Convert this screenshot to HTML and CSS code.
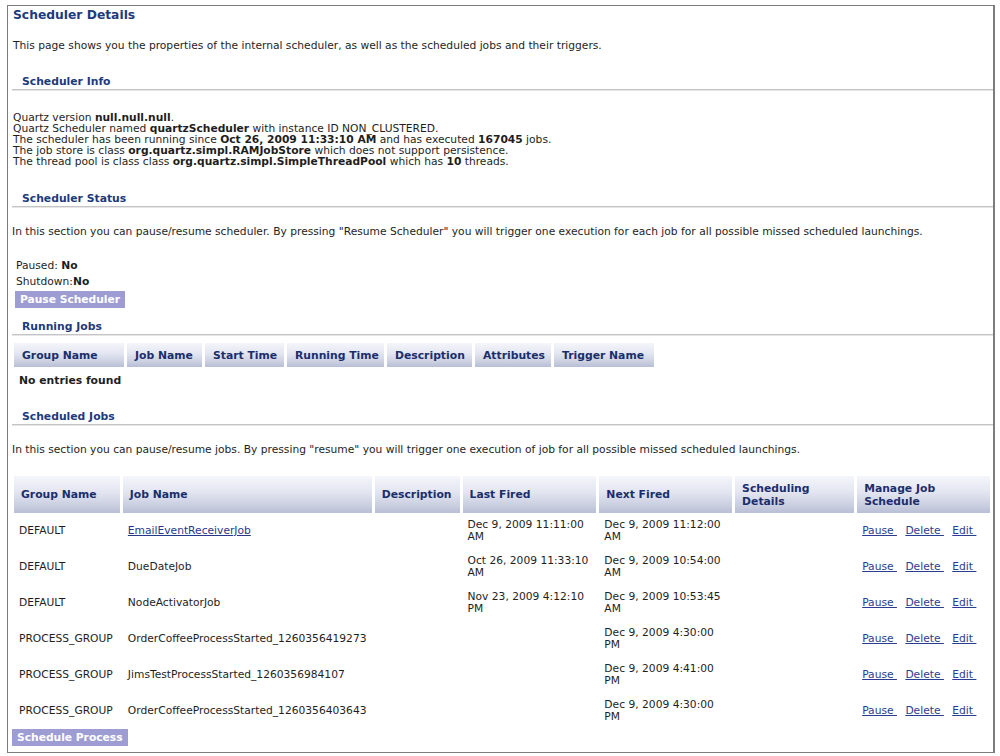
FILE: index.html
```html
<!DOCTYPE html>
<html>
<head>
<meta charset="utf-8">
<link rel="stylesheet" href="styles.css">
</head>
<body>
<div class="frame">
  <h1 class="title">Scheduler Details</h1>
  <p class="desc">This page shows you the properties of the internal scheduler, as well as the scheduled jobs and their triggers.</p>

  <h2 class="section first">Scheduler Info</h2>
  <div class="info">
    <div>Quartz version <b>null.null.null</b>.</div>
    <div>Quartz Scheduler named <b>quartzScheduler</b> with instance ID NON_CLUSTERED.</div>
    <div>The scheduler has been running since <b>Oct 26, 2009 11:33:10 AM</b> and has executed <b>167045</b> jobs.</div>
    <div>The job store is class <b>org.quartz.simpl.RAMJobStore</b> which does not support persistence.</div>
    <div>The thread pool is class class <b>org.quartz.simpl.SimpleThreadPool</b> which has <b>10</b> threads.</div>
  </div>

  <h2 class="section status">Scheduler Status</h2>
  <p class="note">In this section you can pause/resume scheduler. By pressing "Resume Scheduler" you will trigger one execution for each job for all possible missed scheduled launchings.</p>
  <div class="state">
    <div>Paused: <b>No</b></div>
    <div>Shutdown:<b>No</b></div>
  </div>
  <button class="btn pause">Pause Scheduler</button>

  <h2 class="section running">Running Jobs</h2>
  <table class="grid run">
    <colgroup>
      <col style="width:110px"><col style="width:75px"><col style="width:79px"><col style="width:97px"><col style="width:85px"><col style="width:76px"><col style="width:100px">
    </colgroup>
    <thead>
      <tr><th>Group Name</th><th>Job Name</th><th>Start Time</th><th>Running Time</th><th>Description</th><th>Attributes</th><th>Trigger Name</th></tr>
    </thead>
  </table>
  <div class="empty">No entries found</div>

  <h2 class="section scheduled">Scheduled Jobs</h2>
  <p class="note">In this section you can pause/resume jobs. By pressing "resume" you will trigger one execution of job for all possible missed scheduled launchings.</p>
  <table class="grid jobs">
    <colgroup>
      <col style="width:106px"><col style="width:249px"><col style="width:85px"><col style="width:134px"><col style="width:133px"><col style="width:120px"><col style="width:133px">
    </colgroup>
    <thead>
      <tr><th>Group Name</th><th>Job Name</th><th>Description</th><th>Last Fired</th><th>Next Fired</th><th>Scheduling<br>Details</th><th>Manage Job<br>Schedule</th></tr>
    </thead>
    <tbody>
      <tr><td>DEFAULT</td><td><a href="#" class="plain">EmailEventReceiverJob</a></td><td></td><td>Dec 9, 2009 11:11:00<br>AM</td><td>Dec 9, 2009 11:12:00<br>AM</td><td></td><td class="acts"><a href="#">Pause&nbsp;</a> <a href="#">Delete&nbsp;</a> <a href="#">Edit&nbsp;</a></td></tr>
      <tr><td>DEFAULT</td><td>DueDateJob</td><td></td><td>Oct 26, 2009 11:33:10<br>AM</td><td>Dec 9, 2009 10:54:00<br>AM</td><td></td><td class="acts"><a href="#">Pause&nbsp;</a> <a href="#">Delete&nbsp;</a> <a href="#">Edit&nbsp;</a></td></tr>
      <tr><td>DEFAULT</td><td>NodeActivatorJob</td><td></td><td>Nov 23, 2009 4:12:10<br>PM</td><td>Dec 9, 2009 10:53:45<br>AM</td><td></td><td class="acts"><a href="#">Pause&nbsp;</a> <a href="#">Delete&nbsp;</a> <a href="#">Edit&nbsp;</a></td></tr>
      <tr><td>PROCESS_GROUP</td><td>OrderCoffeeProcessStarted_1260356419273</td><td></td><td></td><td>Dec 9, 2009 4:30:00<br>PM</td><td></td><td class="acts"><a href="#">Pause&nbsp;</a> <a href="#">Delete&nbsp;</a> <a href="#">Edit&nbsp;</a></td></tr>
      <tr><td>PROCESS_GROUP</td><td>JimsTestProcessStarted_1260356984107</td><td></td><td></td><td>Dec 9, 2009 4:41:00<br>PM</td><td></td><td class="acts"><a href="#">Pause&nbsp;</a> <a href="#">Delete&nbsp;</a> <a href="#">Edit&nbsp;</a></td></tr>
      <tr><td>PROCESS_GROUP</td><td>OrderCoffeeProcessStarted_1260356403643</td><td></td><td></td><td>Dec 9, 2009 4:30:00<br>PM</td><td></td><td class="acts"><a href="#">Pause&nbsp;</a> <a href="#">Delete&nbsp;</a> <a href="#">Edit&nbsp;</a></td></tr>
    </tbody>
  </table>
  <button class="btn schedule">Schedule Process</button>
</div>
</body>
</html>
```

FILE: styles.css
```css
html, body {
  margin: 0;
  padding: 0;
  background: #ffffff;
}
body {
  font-family: "DejaVu Sans", Verdana, sans-serif;
  font-size: 10.7px;
  color: #1e1e1e;
}
.frame {
  box-sizing: border-box;
  margin: 5px 0 0 7px;
  width: 988px;
  height: 748px;
  border: 1px solid #7c7c7c;
  border-right-width: 2px;
}
.title {
  margin: 0;
  padding-left: 5px;
  font-size: 12.3px;
  line-height: 18px;
  font-weight: bold;
  color: #1d3a7c;
}
.desc {
  margin: 15px 0 0;
  padding-left: 5px;
  line-height: 14px;
}
.section {
  margin: 21px 0 0 4px;
  padding-left: 10px;
  font-size: 10.8px;
  line-height: 15px;
  font-weight: bold;
  color: #1d3a7c;
  border-bottom: 1px solid #c4c4c4;
  box-shadow: 0 1px 0 #e6e6e6;
}
.info {
  margin-top: 22px;
  padding-left: 5px;
  line-height: 11px;
}
.section.status {
  margin-top: 24px;
}
.note {
  margin: 18px 0 0;
  padding-left: 4px;
  line-height: 14px;
}
.state {
  margin-top: 19px;
  padding-left: 8px;
  line-height: 16px;
}
.btn {
  display: block;
  border: 0;
  background: #9d9dd3;
  color: #ffffff;
  font-family: "DejaVu Sans", Verdana, sans-serif;
  font-size: 10.7px;
  font-weight: bold;
  line-height: 17px;
  height: 17px;
  padding: 0 5px;
  margin: 1px 0 0 7px;
}
.section.running {
  margin-top: 11px;
}
.grid {
  border-collapse: separate;
  border-spacing: 3px 0;
  table-layout: fixed;
  margin-left: 3px;
}
.grid th {
  box-sizing: border-box;
  text-align: left;
  font-size: 10.8px;
  font-weight: bold;
  color: #1b2e6c;
  line-height: 13px;
  padding: 0 0 0 8px;
  white-space: nowrap;
  background: linear-gradient(#f5f6fb 0%, #e2e5f0 45%, #c9cee0 80%, #b8bed5 100%);
  vertical-align: middle;
}
.run {
  margin-top: 8px;
}
.run th {
  height: 24px;
}
.empty {
  margin-top: 7px;
  padding-left: 11px;
  font-size: 10.8px;
  font-weight: bold;
  line-height: 14px;
}
.section.scheduled {
  margin-top: 21px;
}
.jobs {
  margin-top: 19px;
}
.jobs th {
  height: 37px;
  padding-left: 7px;
}
.jobs td {
  height: 36px;
  padding: 0 0 0 5px;
  line-height: 12px;
  white-space: nowrap;
  vertical-align: middle;
}
.jobs a {
  color: #2b3d8f;
}
.jobs a.plain {
  color: #27378a;
}
.acts a {
  margin-right: 5px;
}
.btn.schedule {
  margin: 0 0 0 4px;
}
```
